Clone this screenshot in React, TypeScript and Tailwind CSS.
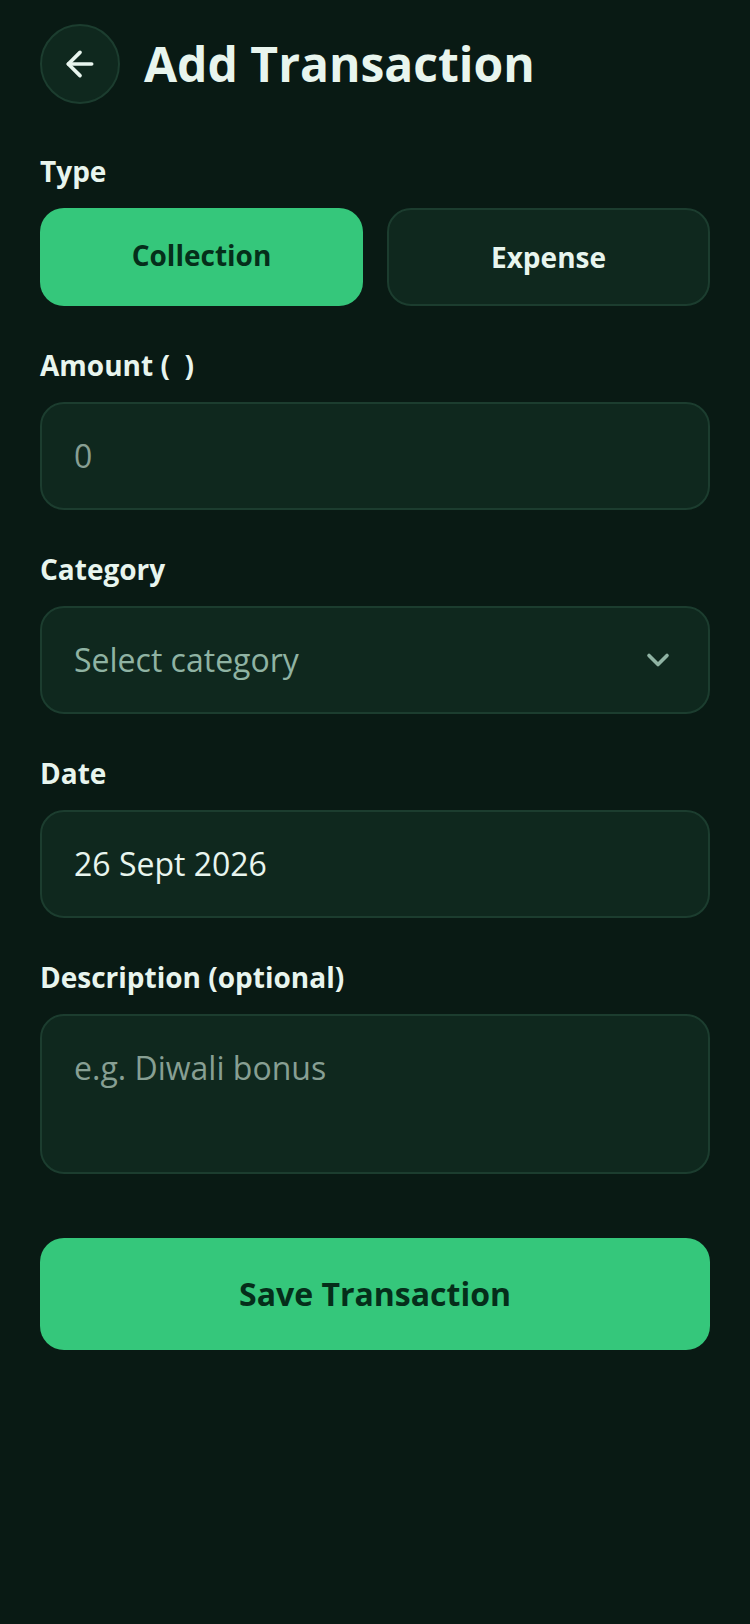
import React, { useState } from "react";
import { ArrowLeft, ChevronDown } from "lucide-react";

const fieldClass =
    "block w-full rounded-3xl border-2 border-[#1c3d2f] bg-[#0f281e] px-8 py-[30px] text-[32px] leading-[44px] outline-none placeholder:text-[#879f93]";

interface FieldProps {
    id: string;
    label: string;
    children: React.ReactNode;
}

const Field: React.FC<FieldProps> = ({ id, label, children }) => (
    <div className="mt-10">
        <label htmlFor={id} className="mb-[18px] block whitespace-pre text-[28px] font-bold leading-[38px]">
            {label}
        </label>
        {children}
    </div>
);

export default function App() {
    const [type, setType] = useState("collection");
    const [category, setCategory] = useState("");

    const typeClass = (value: string) =>
        type === value
            ? "bg-[#35c77b] pt-7 pb-8 text-[#052e1a]"
            : "border-2 border-[#1c3d2f] bg-[#0f281e] py-7 text-[#e8f5ee]";

    return (
        <main className="min-h-screen bg-[#091a14] px-10 pt-6 pb-10 font-['Open_Sans',sans-serif] text-[#e8f5ee]">
            <header className="flex items-center gap-6">
                <button
                    type="button"
                    aria-label="Back"
                    className="flex h-20 w-20 items-center justify-center rounded-full border-2 border-[#1c3d2f] bg-[#0f281e]"
                >
                    <ArrowLeft size={40} strokeWidth={2.2} />
                </button>
                <h1 className="text-[48px] font-bold leading-[64px]">Add Transaction</h1>
            </header>

            <form onSubmit={(e) => e.preventDefault()}>
                {/* Type */}
                <fieldset className="mt-12">
                    <legend className="mb-[18px] text-[28px] font-bold leading-[38px]">Type</legend>
                    <div className="grid grid-cols-2 gap-6 text-[28px] font-bold leading-[38px]">
                        <button
                            type="button"
                            aria-pressed={type === "collection"}
                            onClick={() => setType("collection")}
                            className={`rounded-3xl ${typeClass("collection")}`}
                        >
                            Collection
                        </button>
                        <button
                            type="button"
                            aria-pressed={type === "expense"}
                            onClick={() => setType("expense")}
                            className={`rounded-3xl ${typeClass("expense")}`}
                        >
                            Expense
                        </button>
                    </div>
                </fieldset>

                <Field id="amount" label="Amount (  )">
                    <input id="amount" inputMode="decimal" placeholder="0" className={fieldClass} />
                </Field>

                <Field id="category" label="Category">
                    <div className="relative">
                        <select
                            id="category"
                            value={category}
                            onChange={(e) => setCategory(e.target.value)}
                            className={`${fieldClass} appearance-none ${category ? "text-[#e8f5ee]" : "text-[#8fb3a3]"}`}
                        >
                            <option value="">Select category</option>
                            <option value="donation">Donation</option>
                            <option value="other">Other</option>
                        </select>
                        <ChevronDown
                            size={36}
                            strokeWidth={2.4}
                            className="pointer-events-none absolute right-[34px] top-1/2 -translate-y-1/2 text-[#8fb3a3]"
                        />
                    </div>
                </Field>

                <Field id="date" label="Date">
                    <input id="date" defaultValue="26 Sept 2026" className={fieldClass} />
                </Field>

                <Field id="description" label="Description (optional)">
                    <textarea
                        id="description"
                        placeholder="e.g. Diwali bonus"
                        className={`${fieldClass} h-40 resize-none`}
                    />
                </Field>

                <button
                    type="submit"
                    className="mt-16 w-full rounded-3xl bg-[#35c77b] py-8 text-[32px] font-bold leading-[48px] text-[#052e1a]"
                >
                    Save Transaction
                </button>
            </form>
        </main>
    );
}
